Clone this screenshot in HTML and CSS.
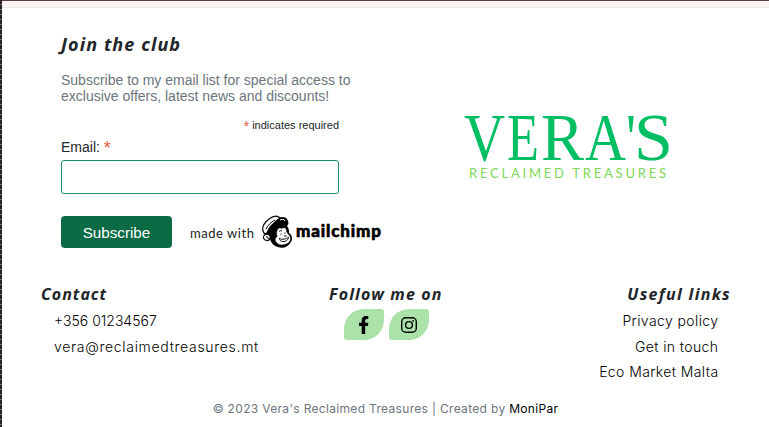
FILE: index.html
```
<!DOCTYPE html>
<html lang="en">
<head>
<meta charset="utf-8">
<title>Vera's Reclaimed Treasures</title>
<link rel="stylesheet" href="styles.css">
</head>
<body>
<div class="strip"></div>
<footer class="footer">
  <section class="top">
    <form class="signup">
      <h2 class="title">Join the club</h2>
      <p class="intro">Subscribe to my email list for special access to<br>exclusive offers, latest news and discounts!</p>
      <p class="required"><span class="star">*</span> indicates required</p>
      <label class="label" for="email">Email: <span class="star big">*</span></label>
      <input class="field" id="email" type="email">
      <div class="actions">
        <button class="submit" type="button">Subscribe</button>
        <svg class="mailchimp" width="194" height="36" viewBox="0 0 194 36">
          <text class="made" x="0" y="24" textLength="64">made with</text>
          <path class="ink" d="M77 18C79 11 84 7 88 4c5-2 9-1 10 3 1 2 0 4-1 5 2 2 2 5 2 7 3 2 4 6 2 9-3 5-8 7-13 5-4-1-7-4-8-8-4 0-6-4-3-7Z"/>
          <path class="cap" d="M73.500 18C71.500 14 74 9 79 5c4-3 8-4 11-1-3 2-6 5-9 8-2 2-3 5-4 7-1 1-3 1-3.500-1Z"/>
          <path class="line pale" d="M90 6c2-1 4-1 5 1"/>
          <path class="face" d="M86.500 20c0-4 2-7 5-5.500 2-1.500 5-1 5 2 0 2 1.500 3 3 5 2 3 1 6-2 8-4 2-9 2-11-1-2-2-1.500-4 0-5.500 1-.8.500-1.500 0-3Z"/>
          <path class="cap" d="M74 21.500c2-2 5-1.500 6 .5s-1 5-3 4.500c-3 0-4.500-3-3-5Z"/>
          <path class="line" d="M76 23c2-.5 2.500.5 2 2M76 15c2-4 5-7 9-9M89 24.500c4 1.500 7 .5 10-1.500M89.500 25.500c2 3.500 7 2.500 9-1M89 17.500c1-1 2-1 3-.5M91 19.500v1.200M95 18.500v1.200M94 22h2.500"/>
          <text class="chimp" x="106" y="23" textLength="85">mailchimp</text>
        </svg>
      </div>
    </form>
    <svg class="brand" width="216" height="94" viewBox="0 0 216 94">
      <g class="name">
        <text x="1" y="69" textLength="41" lengthAdjust="spacingAndGlyphs">V</text>
        <text x="44" y="69" textLength="32" lengthAdjust="spacingAndGlyphs">E</text>
        <text x="78" y="69" textLength="43" lengthAdjust="spacingAndGlyphs">R</text>
        <text x="122" y="69" textLength="41" lengthAdjust="spacingAndGlyphs">A</text>
        <text x="163" y="69" textLength="10" lengthAdjust="spacingAndGlyphs">'</text>
        <text x="171" y="69" textLength="39" lengthAdjust="spacingAndGlyphs">S</text>
      </g>
      <text class="tagline" x="6" y="86.500" textLength="197">RECLAIMED TREASURES</text>
    </svg>
  </section>
  <section class="columns">
    <div class="contact">
      <h3 class="heading">Contact</h3>
      <a class="link phone">+356 01234567</a>
      <a class="link mail">vera@reclaimedtreasures.mt</a>
    </div>
    <div class="follow">
      <h3 class="heading">Follow me on</h3>
      <div class="social">
        <a class="leaf"><svg width="12" height="18" viewBox="0 0 12 18"><path d="M3.700 18v-8H1V6.700h2.700V4.300C3.700 1.600 5.200 0 7.900 0c1.200 0 2.400.2 2.400.2V3H9C7.600 3 7.200 3.800 7.200 4.700v2h3.200L9.900 10H7.200v8Z"/></svg></a>
        <a class="leaf"><svg width="16" height="16" viewBox="0 0 16 16" fill="none" stroke="#000" stroke-width="1.400"><rect x=".7" y=".7" width="14.600" height="14.600" rx="4"/><circle cx="8" cy="8" r="3.400"/><circle cx="12.200" cy="3.800" r=".9" fill="#000" stroke="none"/></svg></a>
      </div>
    </div>
    <div class="useful">
      <h3 class="heading">Useful links</h3>
      <a class="link">Privacy policy</a>
      <a class="link">Get in touch</a>
      <a class="link">Eco Market Malta</a>
    </div>
  </section>
  <p class="copyright">© 2023 Vera's Reclaimed Treasures | Created by <a class="author">MoniPar</a></p>
</footer>
</body>
</html>
```
FILE: styles.css
```
* { box-sizing: border-box; }
html { background: #fff; }
body { margin: 0; height: 427px; overflow: hidden; padding-left: 2px; background: repeating-linear-gradient(#242226 0 4px, #77757a 4px 5px) 0 0 / 2px 100% no-repeat; color: #212529; font-family: Inter, sans-serif; }
h2, h3, p { margin: 0; }
.strip { height: 8px; background: #fff3f1; border-top: 1px solid #5c3a50; border-bottom: 1px solid #eee6e5; }
.top { display: flex; height: 275px; padding: 24px 0 0 59px; }
.signup { width: 330px; font-family: "Liberation Sans", Arial, sans-serif; }
.title, .heading { font-family: "Noto Sans", sans-serif; font-style: italic; font-weight: 700; white-space: nowrap; }
.title { font-size: 18px; line-height: 24px; letter-spacing: 1.080px; }
.intro { margin-top: 16px; font-size: 14px; line-height: 16px; color: #6c757d; white-space: nowrap; }
.required { margin-top: 14px; width: 278px; text-align: right; font-size: 11px; line-height: 14px; }
.star { color: #e85c41; }
.required .star { font-size: 14px; line-height: 1; vertical-align: -2px; }
.big { font-size: 18px; line-height: 1; vertical-align: -2px; }
.label { display: block; margin-top: 4px; height: 23px; font-size: 14px; line-height: 20px; }
.field { display: block; width: 278px; height: 34px; border: 1px solid #198f63; border-radius: 3px; background: #fff; }
.actions { display: flex; align-items: center; gap: 18px; margin-top: 20px; }
.submit { width: 111px; height: 32px; padding: 0; border: 0; border-radius: 4px; background: #0a6b45; color: #fff; font: 15.200px "Liberation Sans", Arial, sans-serif; }
.mailchimp { flex: none; }
.made { font: 13px Lato, sans-serif; fill: #222; }
.chimp { font: 900 17px Lato, sans-serif; stroke: #000; stroke-width: .6px; }
.ink { fill: #000; }
.cap { fill: #fff; stroke: #000; stroke-width: 1.200px; }
.face { fill: #fff; stroke: #000; stroke-width: .5px; }
.line { fill: none; stroke: #000; stroke-width: 1px; }
.pale { stroke: #fff; }
.brand { margin: 59px 0 0 72px; flex: none; }
.name { font: 68px "Liberation Serif", serif; fill: #00bf63; }
.tagline { font: 13px Lato, sans-serif; fill: #7ed957; }
.columns { display: flex; justify-content: space-between; height: 111px; padding: 0 38px 0 39px; }
.contact { width: 288px; }
.useful { width: 288px; text-align: right; }
.heading { margin-bottom: 3px; font-size: 16px; line-height: 22px; letter-spacing: 1.150px; }
.contact .heading { letter-spacing: 1px; }
.useful .heading { letter-spacing: 1.300px; }
.link { display: block; height: 25.500px; font-size: 14px; line-height: 25.500px; letter-spacing: .4px; color: #000; font-weight: 300; }
.contact .link { margin-left: 13px; }
.contact .phone { letter-spacing: 0; }
.contact .mail { letter-spacing: .7px; }
.useful .link { margin-right: 12.500px; }
.follow { flex: 1; }
.social { display: flex; gap: 5px; margin: 4px 0 0 15px; }
.leaf { display: flex; width: 40px; height: 31px; align-items: center; justify-content: center; border-radius: 20px 3px; background: #abe2a9; }
.copyright { padding-top: 5px; text-align: center; font-size: 12px; line-height: 20px; letter-spacing: .32px; color: #6c757d; }
.author { color: #000; }
```
